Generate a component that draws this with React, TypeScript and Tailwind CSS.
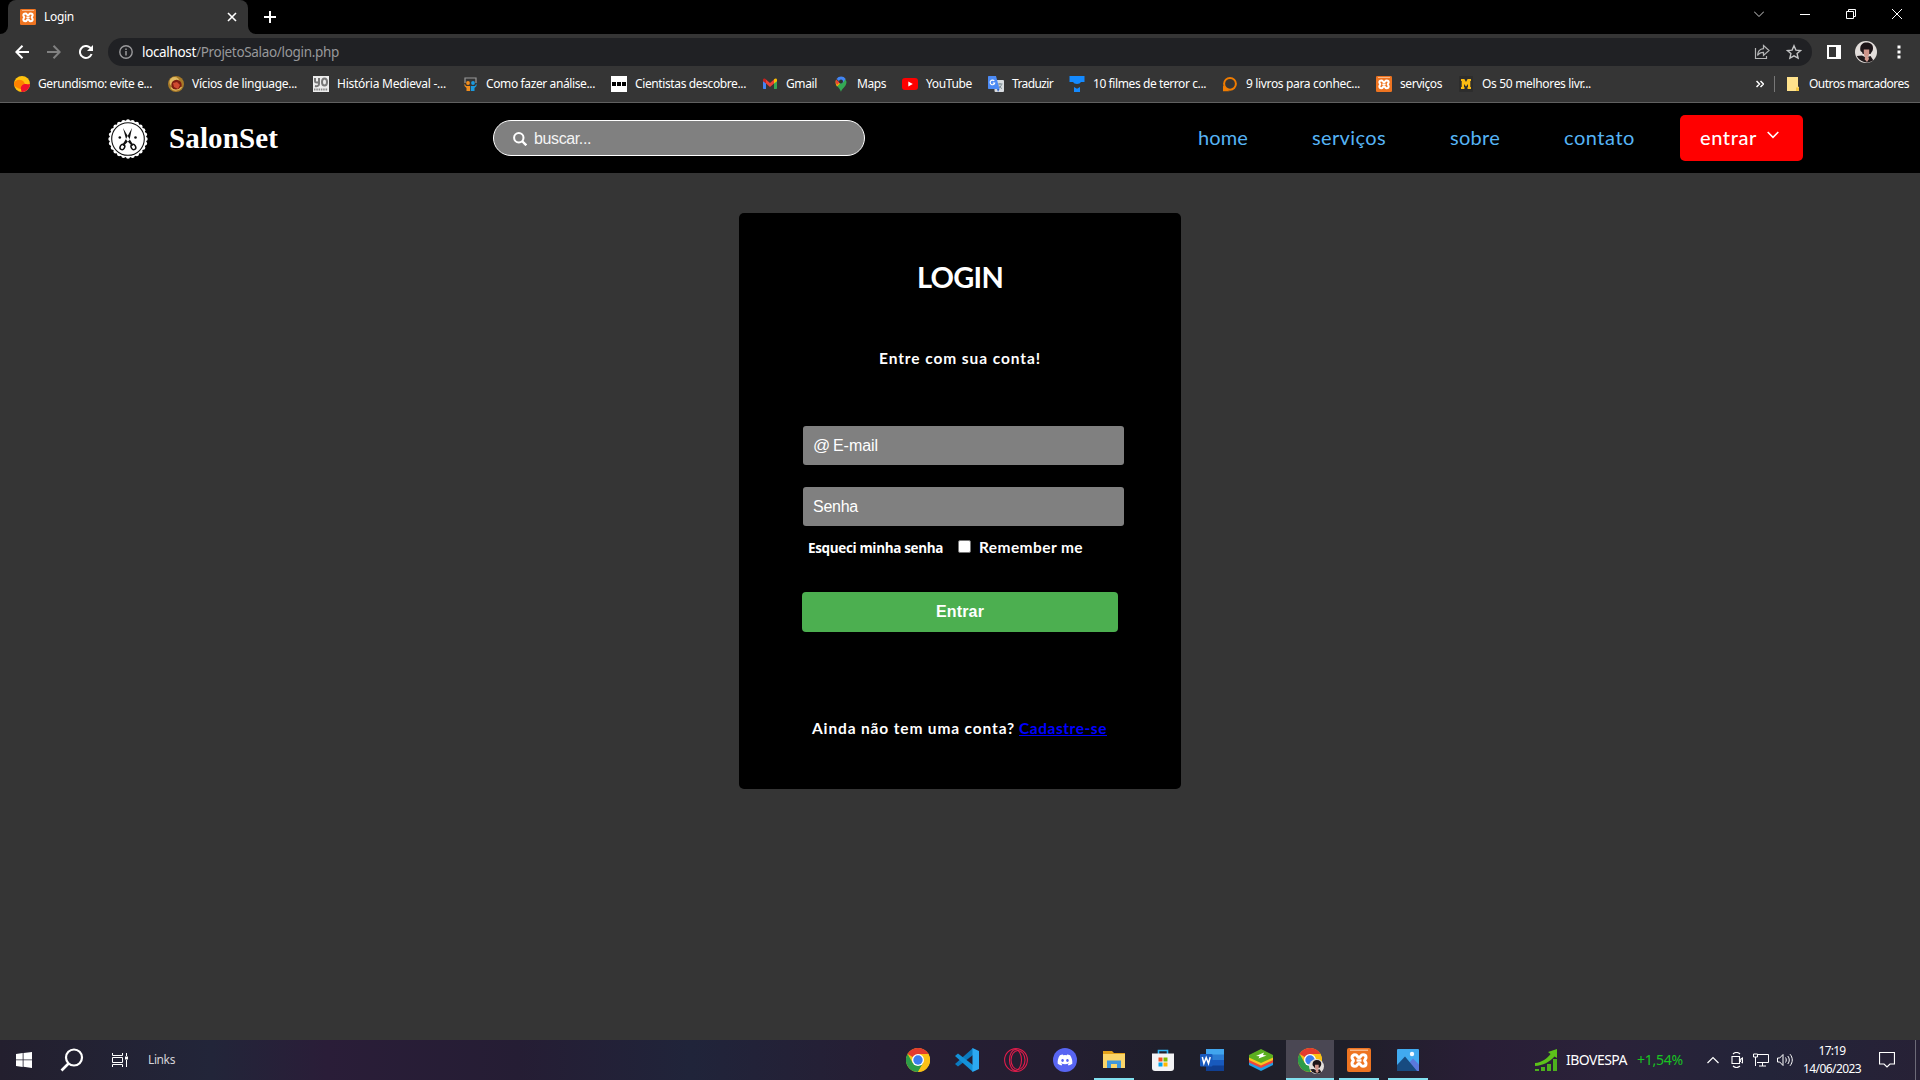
import React, { useLayoutEffect, useRef, useState } from "react";
import { FaDiscord } from "react-icons/fa";

/** Single line label whose letter spacing is adjusted so it fills `w` pixels. */
function Label({ w, className = "", children }: { w: number; className?: string; children: string }) {
  const ref = useRef<HTMLSpanElement>(null);
  const [spacing, setSpacing] = useState(0);
  useLayoutEffect(() => {
    if (ref.current) {
      const natural = ref.current.getBoundingClientRect().width;
      setSpacing((w - natural) / children.length);
    }
  }, [w, children]);
  return (
    <span className={"block shrink-0 whitespace-nowrap " + className} style={{ width: w, letterSpacing: spacing }}>
      <span ref={ref}>{children}</span>
    </span>
  );
}

function Xampp({ className = "size-4" }: { className?: string }) {
  return (
    <svg viewBox="0 0 24 24" className={className}>
      <rect width="24" height="24" rx="2" fill="#ee7421" />
      <rect x="3" y="1.6" width="18" height="1.2" fill="#f9c9a3" />
      <path
        d="M8 6.800c2.600 0 2.200 2.700 4 2.700s1.400-2.700 4-2.700c2 0 3 1.200 3 2.600 0 1.600-1.400 1.800-1.400 3s1.400 1.400 1.400 3-1.200 2.900-3 2.900c-2.600 0-2.200-2.800-4-2.800s-1.400 2.800-4 2.800c-1.800 0-3-1.300-3-2.900s1.400-1.800 1.400-3S5 11 5 9.400c0-1.400 1-2.600 3-2.600z"
        stroke="#fff"
        strokeWidth="3"
        fill="none"
      />
      <path d="M9.500 12.500h5" stroke="#fff" strokeWidth="2.400" />
    </svg>
  );
}

function Chrome({ className = "size-6" }: { className?: string }) {
  return (
    <svg viewBox="0 0 24 24" className={className}>
      <circle cx="12" cy="12" r="12" fill="#fbc116" />
      <path d="M12 12 1.600 6a12 12 0 0 1 20.800 0z" fill="#e33b2e" />
      <path d="M1.600 6a12 12 0 0 0 10.400 18l5.200-9L12 12 6.800 15z" fill="#2d9c48" />
      <path d="M12 6h10.400A12 12 0 0 1 12 24l5.200-9z" fill="#fbc116" />
      <circle cx="12" cy="12" r="6" fill="#fff" />
      <circle cx="12" cy="12" r="4.700" fill="#3b7ded" />
    </svg>
  );
}

function Avatar({ className = "" }: { className?: string }) {
  return (
    <svg viewBox="0 0 22 22" className={className}>
      <circle cx="11" cy="11" r="11" fill="#e3dedb" />
      <path d="M1.800 15 7 14.500l4 2 4.500-1.500 2.800 4.300A11 11 0 0 1 1.800 15z" fill="#20191b" />
      <path d="M11.500 1.500C16 1.500 18.300 4 18 7.500c-.1 1.500-.5 2.500-1.200 3.300L15.500 13H7.800L7 11C5.300 10.500 5 8.500 5.300 6.700 5.700 3.500 8 1.500 11.500 1.500z" fill="#1d1518" />
      <path d="M8.800 8.500h5.400v4c0 2-1.400 3.500-2.700 3.500s-2.700-1.500-2.700-3.500z" fill="#cf958a" />
      <path d="M10 15.500h3.300l.7 2.500-2 3-2.200-2.500z" fill="#d39a8e" />
    </svg>
  );
}

const bookmarks: { text: string; w: number; icon: React.ReactNode }[] = [
  {
    text: "Gerundismo: evite e...",
    w: 114,
    icon: (
      <>
        <circle cx="8" cy="8" r="8" fill="#ffc20e" />
        <path d="M0 7a5.800 5.800 0 1 1 10.500 5A8 8 0 0 1 0 9z" fill="#ff8200" />
        <path d="M7 13.500C6 9.500 10 7.500 13 8.200c1.500.3 2.500 0 3-.5A8 8 0 0 1 7.500 16z" fill="#f0122d" />
      </>
    ),
  },
  {
    text: "Vícios de linguage...",
    w: 105,
    icon: (
      <>
        <circle cx="8" cy="8" r="8" fill="#a87a28" />
        <circle cx="6.500" cy="6" r="5" fill="#e0bb62" />
        <circle cx="8.500" cy="9" r="5.200" fill="#7d1d12" />
        <path d="M5 7l4-1 3 3-2 4-4-2z" fill="#cf4a31" />
        <path d="M3 11.500c2 3.500 8 3.500 10.500-.5" stroke="#e0bb62" strokeWidth="1.200" fill="none" />
      </>
    ),
  },
  {
    text: "História Medieval -...",
    w: 109,
    icon: (
      <>
        <rect width="16" height="16" fill="#ececec" />
        <path d="M2 2v3c0 2 4 2 4 0V2M6 4v4c0 2-2 2.500-4 2" stroke="#777" strokeWidth="2" fill="none" />
        <ellipse cx="11.500" cy="6" rx="2.500" ry="3.500" stroke="#777" strokeWidth="2" fill="none" />
        <path d="M1 13.500h14" stroke="#888" strokeWidth="2" strokeDasharray="1.500 .8" />
      </>
    ),
  },
  {
    text: "Como fazer análise...",
    w: 109,
    icon: (
      <>
        <path d="M3 7V2h11v5" stroke="#999" strokeWidth="1.200" fill="none" />
        <circle cx="6" cy="7" r="1.900" fill="#f18d1d" />
        <circle cx="11" cy="7" r="1.900" fill="#1b9be0" />
        <path d="M2.500 7.500 4 10h4v5H4.500v-3L2.500 10z" fill="#f18d1d" />
        <path d="M14.500 7.500 13 10H8.800v5h3.700v-3l2-2z" fill="#1b9be0" />
      </>
    ),
  },
  {
    text: "Cientistas descobre...",
    w: 111,
    icon: (
      <>
        <rect width="16" height="16" fill="#fff" />
        <path d="M1 6h4v4H1zM6 6h4v4H6zM11 6h4v4h-4z" fill="#000" />
      </>
    ),
  },
  {
    text: "Gmail",
    w: 31,
    icon: (
      <>
        <path d="M1 3.500 4 6v7H2c-.6 0-1-.4-1-1z" fill="#4285f4" />
        <path d="M15 3.500 12 6v7h2c.6 0 1-.4 1-1z" fill="#34a853" />
        <path d="M4 3.500 8 7l4-3.500v4L8 11 4 7.500z" fill="#ea4335" />
        <path d="M1 4c0-1.500 1.500-2 3-.7v4.200L1 5.300z" fill="#c5221f" />
        <path d="M15 4c0-1.500-1.500-2-3-.7v4.200l3-2.200z" fill="#fbbc04" />
      </>
    ),
  },
  {
    text: "Maps",
    w: 29,
    icon: (
      <>
        <path d="M8 16c0-3 5.500-5 5.500-10.300L12 2.800 4 10c2 2 3.500 4 4 6z" fill="#34a853" />
        <path d="M3 4 7 7.500 4 10.500C2.700 8.500 2 6.500 3 4z" fill="#fbbc04" />
        <path d="M3.200 3.500 6.500 6.400 4 9C2.500 7 2.300 5 3.200 3.500z" fill="#ea4335" />
        <path d="M3.500 3A5.600 5.600 0 0 1 12.700 3L9 7.500z" fill="#4285f4" />
        <circle cx="8" cy="5.600" r="2" fill="#303030" />
      </>
    ),
  },
  {
    text: "YouTube",
    w: 46,
    icon: (
      <>
        <rect y="2" width="16" height="12" rx="3" fill="#f00" />
        <path d="M6.300 5.500v5L10.800 8z" fill="#fff" />
      </>
    ),
  },
  {
    text: "Traduzir",
    w: 41,
    icon: (
      <>
        <rect x="6.500" y="4" width="9.500" height="12" rx="1" fill="#d8dce0" />
        <path d="M9.500 8h5M12 7v1.500M13.500 8.500c-.5 2-2 3.500-3.500 4M10.800 9.500c.7 1.500 2 2.500 3.200 3" stroke="#7a8a90" fill="none" />
        <path d="M1 0h7l3.500 13H1c-.6 0-1-.4-1-1V1c0-.6.4-1 1-1z" fill="#4c8bf5" />
        <path d="M9 13h2.500L10 16z" fill="#3262c0" />
        <path d="M6.300 5A2.300 2.300 0 1 0 6.700 7H4.800" stroke="#fff" strokeWidth="1.100" fill="none" />
      </>
    ),
  },
  {
    text: "10 filmes de terror c...",
    w: 113,
    icon: (
      <>
        <path d="M.5 0h15v6H12l-1.500 1.500-2.500.500-2.500-.500L4 6H.5z" fill="#148aff" />
        <path d="M5 11l3 1.800L11 11v5H5z" fill="#148aff" />
      </>
    ),
  },
  {
    text: "9 livros para conhec...",
    w: 114,
    icon: (
      <>
        <circle cx="8" cy="7.800" r="5.900" stroke="#f07c00" strokeWidth="2" fill="none" />
        <path d="M1 9.500v5.800h6.500L4 12z" fill="#f07c00" />
      </>
    ),
  },
  { text: "serviços", w: 42, icon: <Xampp /> },
  {
    text: "Os 50 melhores livr...",
    w: 109,
    icon: (
      <>
        <rect x="1" width="14" height="16" rx="1" fill="#2d2d2d" />
        <path d="M3 3h3.400L8 6l1.600-3H13v2h-.7v6H13v2H9.500v-2h.5V8L8 10.500 6 8v3h.5v2H3v-2h.7V5H3z" fill="#fcbc12" />
      </>
    ),
  },
];

function TabStrip() {
  return (
    <div className="flex h-[34px] bg-black">
      <div className="flex w-2 items-end bg-[#353535]">
        <div className="h-full w-full rounded-br-lg bg-black" />
      </div>
      <div className="flex w-60 bg-black">
        <div className="flex w-full items-center rounded-t-lg bg-[#353535] pl-3 text-white">
          <Xampp />
          <Label w={30} className="ml-2 text-[12px] leading-4">Login</Label>
          <svg viewBox="0 0 10 10" className="ml-auto mr-[11px] size-[10px]">
            <path d="M1 1l8 8M9 1 1 9" stroke="#fff" strokeWidth="1.600" />
          </svg>
        </div>
      </div>
      <div className="flex w-2 bg-[#353535]">
        <div className="h-full w-full rounded-bl-lg bg-black" />
      </div>
      <svg viewBox="0 0 12 12" className="ml-2 mt-[11px] size-3">
        <path d="M6 0v12M0 6h12" stroke="#fff" strokeWidth="2" />
      </svg>
      <div className="ml-auto mr-[18px] flex h-7 items-center gap-9 text-white">
        <svg viewBox="0 0 10 10" className="size-[10px]">
          <path d="M0 2.500 5 7.500l5-5" stroke="#ccc" fill="none" />
        </svg>
        <svg viewBox="0 0 10 10" className="size-[10px]">
          <path d="M0 5.500h10" stroke="#fff" />
        </svg>
        <svg viewBox="0 0 10 10" className="size-[10px]">
          <path d="M.5 2.500h7v7h-7zM2.500 2.500v-2h7v7h-2" stroke="#fff" fill="none" />
        </svg>
        <svg viewBox="0 0 10 10" className="size-[10px]">
          <path d="m0 0 10 10M10 0 0 10" stroke="#fff" />
        </svg>
      </div>
    </div>
  );
}

function Toolbar() {
  return (
    <div className="flex h-9 items-center bg-[#353535] pl-[15px] pr-[19px]">
      <svg viewBox="0 0 14 14" className="size-[14px]">
        <path d="M14 7H1.500M7.500.8 1.300 7l6.200 6.200" stroke="#fff" strokeWidth="2" fill="none" />
      </svg>
      <svg viewBox="0 0 14 14" className="ml-[18px] size-[14px]">
        <path d="M0 7h12.500M6.500.8 12.700 7l-6.200 6.200" stroke="#818181" strokeWidth="2" fill="none" />
      </svg>
      <svg viewBox="0 0 14 14" className="ml-[18px] size-[14px]">
        <path d="M12.600 9A6 6 0 1 1 11.300 2.800L13 4.500" stroke="#fff" strokeWidth="2" fill="none" />
        <path d="M14 0v6H8z" fill="#fff" />
      </svg>
      <div className="ml-[15px] flex h-7 flex-1 items-center rounded-full bg-[#202124] pl-[11px] pr-[10px]">
        <svg viewBox="0 0 14 14" className="size-[14px]">
          <circle cx="7" cy="7" r="6.200" stroke="#9a9a9c" strokeWidth="1.400" fill="none" />
          <path d="M7 6v4.500M7 3.500V5" stroke="#9a9a9c" strokeWidth="1.500" />
        </svg>
        <Label w={54} className="ml-[9px] text-[13.500px] text-white">localhost</Label>
        <Label w={143} className="text-[13.500px] text-[#97989a]">/ProjetoSalao/login.php</Label>
        <svg viewBox="0 0 16 16" className="ml-auto size-4">
          <path d="M1.500 4v10.500h11V12M9.500 1.500l5.500 5-5.500 5V8.300C6.500 8.300 4.800 9.300 3.500 11.500 3.700 7.500 6 4.900 9.500 4.600z" stroke="#b4b5b6" strokeWidth="1.200" fill="none" />
        </svg>
        <svg viewBox="0 0 16 16" className="ml-4 size-4">
          <path d="m8 1.800 1.900 4.300 4.700.4-3.500 3.100 1 4.600L8 11.800l-4.100 2.400 1-4.600L1.400 6.500l4.700-.4z" stroke="#c3c4c5" strokeWidth="1.400" fill="none" />
        </svg>
      </div>
      <svg viewBox="0 0 14 14" className="ml-[15px] size-[14px]">
        <path d="M1 1h12v12H1z" stroke="#fff" strokeWidth="2" fill="none" />
        <path d="M9 1h4v12H9z" fill="#fff" />
      </svg>
      <Avatar className="ml-[14px] size-[22px]" />
      <svg viewBox="0 0 4 14" className="ml-5 h-[14px] w-1">
        <path d="M.5.500h3v3h-3zM.5 5.500h3v3h-3zM.5 10.500h3v3h-3z" fill="#fff" />
      </svg>
    </div>
  );
}

function Bookmarks() {
  return (
    <div className="flex h-[33px] items-center border-b border-[#606060] bg-[#353535] pl-[14px] pr-[11px] text-[12px] leading-4 text-white">
      <div className="flex gap-4 pb-1">
        {bookmarks.map((b) => (
          <div key={b.text} className="flex items-center gap-2">
            <svg viewBox="0 0 16 16" className="size-4">{b.icon}</svg>
            <Label w={b.w} className="-mt-px">{b.text}</Label>
          </div>
        ))}
      </div>
      <div className="ml-auto flex items-center pb-1">
        <svg viewBox="0 0 8 8" className="size-2">
          <path d="M.5 1 3.500 4l-3 3M4.500 1l3 3-3 3" stroke="#fff" strokeWidth="1.500" fill="none" />
        </svg>
        <div className="ml-[10px] h-4 w-px bg-[#777]" />
        <svg viewBox="0 0 12 14" className="ml-3 h-[14px] w-3">
          <path d="M0 0h11v9.500l1 .5v4H0z" fill="#ffe28c" />
          <path d="M9 10.500h3V14H9z" fill="#f6c945" />
        </svg>
        <Label w={100} className="-mt-px ml-[10px]">Outros marcadores</Label>
      </div>
    </div>
  );
}

function SiteLogo() {
  const teeth = Array.from({ length: 24 }, (_, i) => (i * Math.PI) / 12);
  return (
    <svg viewBox="0 0 40 40" className="mt-[2px] size-10">
      <circle cx="20" cy="20" r="18.500" fill="#fff" />
      {teeth.map((a) => (
        <circle key={a} cx={20 + 17.700 * Math.cos(a)} cy={20 + 17.700 * Math.sin(a)} r="2" fill="#fff" />
      ))}
      <circle cx="20" cy="20" r="16.300" stroke="#111" strokeWidth="1.100" fill="none" />
      <path d="M15 9 21.500 20l3.800 6-1.300 1L18.300 21zM24 9 18 20l-3.800 6 1.300 1L21.500 21z" fill="#111" />
      <ellipse cx="14.400" cy="28" rx="2.200" ry="2.800" transform="rotate(30 14.400 28)" stroke="#111" strokeWidth="1.500" fill="none" />
      <ellipse cx="25.400" cy="28" rx="2.200" ry="2.800" transform="rotate(-30 25.400 28)" stroke="#111" strokeWidth="1.500" fill="none" />
      <circle cx="11.800" cy="18.500" r="1.300" fill="#111" />
      <circle cx="27.500" cy="18.500" r="1.300" fill="#111" />
    </svg>
  );
}

function SiteHeader() {
  return (
    <header className="flex h-[70px] items-center bg-black pl-[108px] font-[Lato,sans-serif]">
      <SiteLogo />
      <Label w={109} className="ml-[21px] font-['Liberation_Serif',serif] text-[29px] font-bold leading-9 text-white">SalonSet</Label>
      <div className="ml-[215px] flex h-9 w-[372px] items-center rounded-full border border-white bg-[#808080] pl-[19px]">
        <svg viewBox="0 0 14 14" className="mt-[2px] size-[14px]">
          <circle cx="5.800" cy="5.800" r="4.700" stroke="#fff" strokeWidth="2" fill="none" />
          <path d="m9 9 4.300 4.300" stroke="#fff" strokeWidth="2.400" />
        </svg>
        <Label w={57} className="ml-[7px] pt-[2px] font-['Liberation_Sans',sans-serif] text-[16px] leading-5 text-[#f4f4f4]">buscar...</Label>
      </div>
      <nav className="ml-[333px] flex pb-[2px] text-[20px] leading-7 text-[#56b4f5]">
        <Label w={50}>home</Label>
        <Label w={74} className="ml-[64px]">serviços</Label>
        <Label w={50} className="ml-[64px]">sobre</Label>
        <Label w={71} className="ml-[64px]">contato</Label>
      </nav>
      <button className="ml-[45px] flex h-[46px] w-[123px] items-center rounded-[5px] bg-[#f00] pl-5 text-[20px] leading-7 text-white">
        <Label w={57} className="pb-[2px] font-medium">entrar</Label>
        <svg viewBox="0 0 12 8" className="mb-[7px] ml-[10px] h-2 w-3">
          <path d="m.7 1 5.300 5.300L11.300 1" stroke="#fff" strokeWidth="1.600" fill="none" />
        </svg>
      </button>
    </header>
  );
}

function LoginCard() {
  return (
    <section className="flex h-[576px] w-[442px] flex-col rounded-[5px] bg-black font-[Lato,sans-serif] text-white">
      <Label w={86} className="mt-[46px] self-center text-[29px] font-bold leading-9">LOGIN</Label>
      <Label w={162} className="mt-[51px] self-center text-[15.500px] font-bold leading-6">Entre com sua conta!</Label>
      <div className="ml-16 mt-[56px] flex h-[39px] w-[321px] items-center rounded-[3px] bg-[#808080] pl-[10px] font-['Liberation_Sans',sans-serif] text-[16px]">
        <Label w={20} className="text-[17px]">@</Label>
        <Label w={45}>E-mail</Label>
      </div>
      <div className="ml-16 mt-[22px] flex h-[39px] w-[321px] items-center rounded-[3px] bg-[#808080] pl-[10px] font-['Liberation_Sans',sans-serif] text-[16px]">
        <Label w={45}>Senha</Label>
      </div>
      <div className="ml-[69px] mt-[9px] flex h-6 items-center font-bold">
        <Label w={135} className="pt-[2px] font-['Open_Sans',sans-serif] text-[13.500px] leading-6">Esqueci minha senha</Label>
        <div className="mb-[1px] ml-[15px] size-[13px] rounded-[2px] border border-[#767676] bg-white" />
        <Label w={104} className="ml-2 text-[15.500px] leading-6">Remember me</Label>
      </div>
      <button className="ml-[63px] mt-[33px] flex h-10 w-[316px] items-center justify-center rounded-[4px] bg-[#4caf50] font-['Liberation_Sans',sans-serif] text-[16px] font-bold">
        <Label w={48}>Entrar</Label>
      </button>
      <div className="ml-[73px] mt-[84px] flex gap-1 text-[15.500px] font-bold leading-6">
        <Label w={203}>Ainda não tem uma conta?</Label>
        <a className="text-[#00f] underline" href="#cadastro">
          <Label w={88}>Cadastre-se</Label>
        </a>
      </div>
    </section>
  );
}

function TaskbarItem({ children, state = "" }: { children: React.ReactNode; state?: "" | "open" | "active" }) {
  return (
    <div className={state === "active" ? "flex h-10 w-12 flex-col bg-[#4a4753]" : "flex h-10 w-12 flex-col"}>
      <div className="flex h-[38px] items-center justify-center pt-[2px]">{children}</div>
      <div className={state === "active" ? "h-[2px] w-12 bg-[#82e0ef]" : state === "open" ? "mx-auto h-[2px] w-10 bg-[#82e0ef]" : "h-[2px]"} />
    </div>
  );
}

function Taskbar() {
  return (
    <footer className="flex h-10 items-center bg-[linear-gradient(90deg,#231f2e_0%,#222539_11%,#2a1d38_17%,#251d34_27%,#20243a_36%,#261e34_46%,#241e31_55%,#1f1f2b_61%,#1f1f29_70%,#291e36_77%,#2a2239_84%,#232439_92%,#272136_100%)] text-[12px] leading-4 text-white">
      <svg viewBox="0 0 16 16" className="ml-4 size-4">
        <path d="M0 2 6.700 1v6.500H0zM7.500.900 16 0v7.500H7.500zM0 8.300h6.700V15L0 14zM7.500 8.300H16V16l-8.500-1.200z" fill="#fff" />
      </svg>
      <svg viewBox="0 0 24 24" className="ml-[28px] size-6">
        <circle cx="14" cy="9.500" r="8" stroke="#fff" strokeWidth="2.200" fill="none" />
        <path d="M8.500 15.500 1.500 22.500" stroke="#fff" strokeWidth="2.600" />
      </svg>
      <svg viewBox="0 0 16 16" className="ml-7 size-4">
        <path d="M.5 1v2.500h10V1M.5 15v-2.500h10V15M.5 5.500h10v5H.5zM14.500 1v3M14.500 8v7" stroke="#fff" fill="none" />
        <path d="M13 4.500h3v3h-3z" fill="#fff" />
      </svg>
      <Label w={27} className="ml-5 text-[#d4d3d8]">Links</Label>
      <div className="ml-[719px] flex gap-px">
        <TaskbarItem><Chrome /></TaskbarItem>
        <TaskbarItem>
          <svg viewBox="0 0 24 24" className="size-6">
            <path d="M18 0v7L3 18.500 0 16z" fill="#0b7bc0" />
            <path d="M18 24v-7L3 5.500 0 8z" fill="#1491d8" />
            <path d="m17.500 0 6.500 3v18l-6.500 3z" fill="#2ca9f2" />
          </svg>
        </TaskbarItem>
        <TaskbarItem>
          <svg viewBox="0 0 24 24" className="size-6">
            <g stroke="#e01c4b" strokeWidth="1.100" fill="none">
              <circle cx="12" cy="12" r="11.400" />
              <ellipse cx="11.500" cy="12" rx="6" ry="10.500" />
              <ellipse cx="14" cy="12" rx="7" ry="9.500" />
            </g>
          </svg>
        </TaskbarItem>
        <TaskbarItem>
          <div className="flex size-6 items-center justify-center rounded-full bg-[#5865f2]">
            <FaDiscord className="size-4 text-white" />
          </div>
        </TaskbarItem>
        <TaskbarItem state="open">
          <svg viewBox="0 0 22 20" className="h-5 w-[22px]">
            <path d="M0 1h9l2 2h11v15H0z" fill="#e3a21a" />
            <path d="M0 4h22v14H0z" fill="#fbd669" />
            <path d="M4 10.500h14V18h-4v-4H8v4H4z" fill="#3f97dd" />
          </svg>
        </TaskbarItem>
        <TaskbarItem>
          <svg viewBox="0 0 24 24" className="size-6">
            <path d="M7.500 6V2.500h9V6" stroke="#2fb4f2" strokeWidth="1.600" fill="none" />
            <path d="M1 5.500h22V20c0 2-1 3-3 3H4c-2 0-3-1-3-3z" fill="#f3f3f5" />
            <path d="M7.500 9.500h4v4h-4z" fill="#f25022" />
            <path d="M12.500 9.500h4v4h-4z" fill="#7fba00" />
            <path d="M7.500 14.500h4v4h-4z" fill="#00a4ef" />
            <path d="M12.500 14.500h4v4h-4z" fill="#ffb900" />
          </svg>
        </TaskbarItem>
        <TaskbarItem>
          <svg viewBox="0 0 24 22" className="h-[22px] w-6">
            <path d="M6 0h18v6H6z" fill="#41a5ee" />
            <path d="M6 5.500h18v6H6z" fill="#2b7cd3" />
            <path d="M6 11h18v6H6z" fill="#185abd" />
            <path d="M6 16.500h18V22H6z" fill="#103f91" />
            <rect y="5" width="12.500" height="12.500" rx="1" fill="#185abd" />
            <path d="m2.300 8 1.600 6.500L6.200 8.500l2.300 6L10.200 8" stroke="#fff" strokeWidth="1.500" fill="none" />
          </svg>
        </TaskbarItem>
        <TaskbarItem>
          <svg viewBox="0 0 24 22" className="h-[22px] w-6">
            <path d="M0 12.500 12 18l12-5.500v3.500L12 22 0 16z" fill="#1f9ee5" />
            <path d="M0 10 12 15.500 24 10v3.500L12 19 0 13.500z" fill="#f0453a" />
            <path d="M0 7.500 12 13l12-5.500V11l-12 5.500L0 11z" fill="#f6c820" />
            <path d="M0 6 12 0l12 6v2.500L12 14 0 8.500z" fill="#5bae1f" />
            <path d="m7 7 8-3.500L14 6l3.500.500-8 3 1-2.300z" fill="#fff" />
          </svg>
        </TaskbarItem>
        <TaskbarItem state="active">
          <div className="relative">
            <Chrome />
            <Avatar className="absolute left-[11px] top-[11px] size-[15px]" />
          </div>
        </TaskbarItem>
        <TaskbarItem state="open"><Xampp className="size-6" /></TaskbarItem>
        <TaskbarItem state="open">
          <svg viewBox="0 0 22 22" className="size-[22px]">
            <rect width="22" height="22" rx="1" fill="#41aaf0" />
            <path d="M11 15l5-5.500 6 6V22H11z" fill="#5a78dc" />
            <path d="M0 16 8 7.500 20 22H0z" fill="#174b80" />
            <circle cx="15" cy="5" r="2.200" fill="#f4faff" />
          </svg>
        </TaskbarItem>
      </div>
      <div className="ml-auto flex h-10 items-center">
        <svg viewBox="0 0 22 22" className="size-[22px]">
          <path d="M0 14c7-.5 12-4.500 15.500-9L13 3l9-3v9l-2.500-1.500C14.500 13 8 16.500 0 17z" fill="#5cc21a" />
          <path d="M0 20h4v2H0zM6 18h4v4H6zM12 15h4v7h-4zM18 10h4v12h-4z" fill="#4db01d" />
        </svg>
        <Label w={61} className="ml-[9px] text-[14px]">IBOVESPA</Label>
        <Label w={46} className="ml-[10px] text-[14px] text-[#18c422]">+1,54%</Label>
        <svg viewBox="0 0 12 8" className="ml-6 h-2 w-3">
          <path d="M.5 7 6 1.500 11.500 7" stroke="#fff" strokeWidth="1.200" fill="none" />
        </svg>
        <svg viewBox="0 0 12 16" className="ml-3 h-4 w-3">
          <path d="M2 2c2-1.800 5-1.800 7 0M2 14c2 1.800 5 1.800 7 0M1 4.500h7.500v7H1zM8.500 8l3-2v4.500z" stroke="#fff" strokeWidth="1.100" fill="none" />
        </svg>
        <svg viewBox="0 0 16 14" className="ml-[10px] h-[14px] w-4">
          <path d="M5 1.500h10.500v8H4M9.500 9.500v3.500M6 13h7M.5 1h4v3h-4zM2.500 4v9" stroke="#fff" fill="none" />
        </svg>
        <svg viewBox="0 0 16 14" className="ml-2 h-[14px] w-4">
          <path d="M.5 5h2.200L6 1.500v11L2.700 9H.5zM8.500 4.500c1 1.500 1 3.500 0 5M10.800 3c2 2.500 2 5.500 0 8M13 1.200c3 3.500 3 8 0 11.600" stroke="#fff" fill="none" />
        </svg>
        <div className="ml-[10px] flex h-10 flex-col items-center gap-[2px] pt-[3px]">
          <Label w={27}>17:19</Label>
          <Label w={58}>14/06/2023</Label>
        </div>
        <svg viewBox="0 0 16 16" className="ml-[18px] size-4">
          <path d="M.5.500h15v11.500H11L8 15l-3-3H.5z" stroke="#fff" strokeWidth="1.200" fill="none" />
        </svg>
        <div className="ml-5 mr-1 h-10 w-px bg-[#6d6a78]" />
      </div>
    </footer>
  );
}

export default function App() {
  return (
    <div className="flex h-[1080px] w-[1920px] flex-col overflow-hidden bg-[#353535] font-['Noto_Sans','Open_Sans',sans-serif]">
      <TabStrip />
      <Toolbar />
      <Bookmarks />
      <SiteHeader />
      <main className="flex flex-1 items-start justify-center pt-10">
        <LoginCard />
      </main>
      <Taskbar />
    </div>
  );
}
